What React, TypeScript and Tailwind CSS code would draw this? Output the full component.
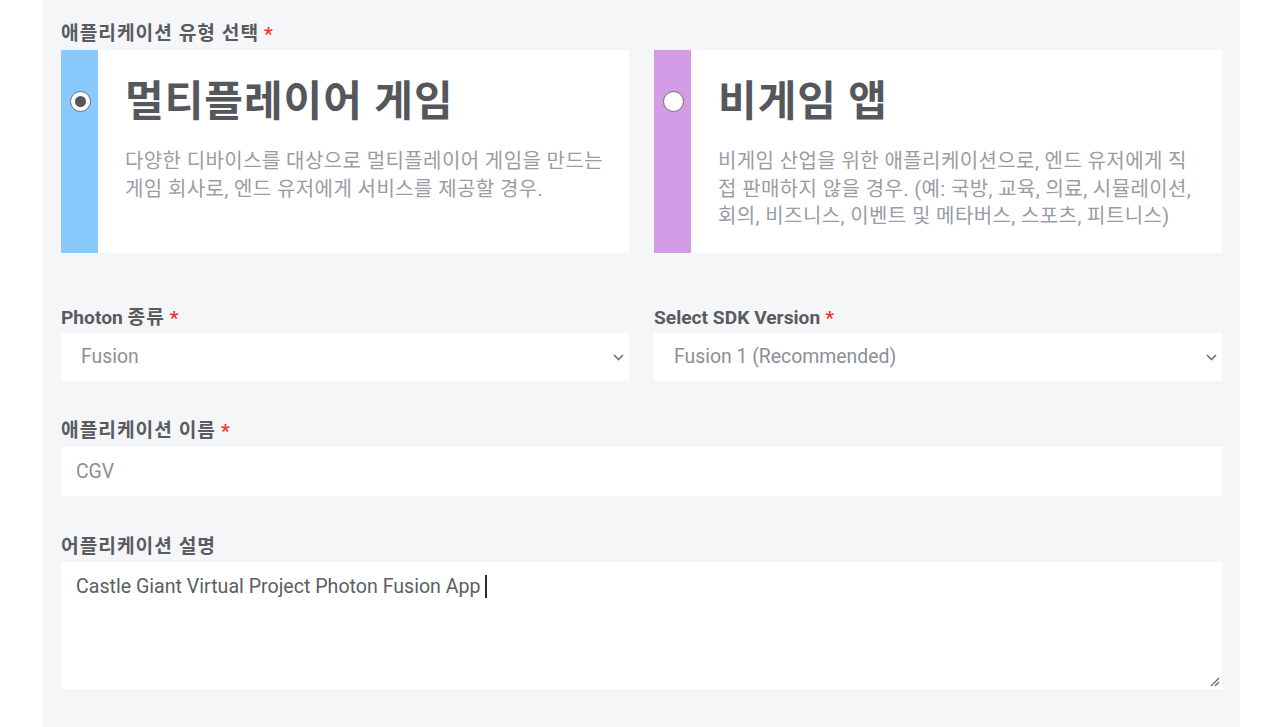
import React from "react";

const font = { fontFamily: 'Roboto, "Noto Sans CJK KR", "Noto Sans", sans-serif' };

function Star() {
  return <span className="text-[#e8392f] ml-[5px] tracking-normal">*</span>;
}

function Radio({ checked }: { checked: boolean }) {
  return (
    <div className="w-[21px] h-[21px] rounded-full bg-white border-[1.5px] border-[#6b6d72] flex items-center justify-center">
      {checked && <div className="w-[11px] h-[11px] rounded-full bg-[#55575d]" />}
    </div>
  );
}

function Card({
  color,
  checked,
  title,
  desc,
}: {
  color: string;
  checked: boolean;
  title: string;
  desc: string;
}) {
  return (
    <div className="flex bg-white h-[203px]">
      <div className={`w-[37px] shrink-0 flex justify-center pl-[2px] pt-[41px] ${color}`}>
        <Radio checked={checked} />
      </div>
      <div className="pl-[27px] pr-[22px] pt-[27px]">
        <div className="text-[42px] leading-[50px] font-bold text-[#55575d] tracking-[1px]">{title}</div>
        <div className="mt-[21px] text-[20px] leading-[27.5px] text-[#989ca4] tracking-[0.4px]">{desc}</div>
      </div>
    </div>
  );
}

function Chevron() {
  return (
    <svg width="11" height="7" viewBox="0 0 11 7" fill="none">
      <path d="M1 1l4.5 4.5L10 1" stroke="#6e7177" strokeWidth="1.6" />
    </svg>
  );
}

function Select({ value }: { value: string }) {
  return (
    <div className="h-[48px] bg-white flex items-center justify-between pl-[20px] pr-[5px] text-[19.4px] text-[#8b8f96]">
      <span>{value}</span>
      <Chevron />
    </div>
  );
}

const labelCls = "text-[19.2px] leading-[24px] font-bold text-[#595b61]";

export default function App() {
  return (
    <div className="w-[1265px] h-[727px] bg-white overflow-hidden" style={font}>
      <div className="ml-[43px] w-[1197px] h-[727px] bg-[#f5f6f8] px-[18px] pt-[22px]">
        <div className={`${labelCls} mb-[4px]`}>
          <span className="tracking-[1px]">애플리케이션 유형 선택</span>
          <Star />
        </div>
        <div className="grid grid-cols-2 gap-[25px]">
          <Card
            color="bg-[#89c9fb]"
            checked
            title="멀티플레이어 게임"
            desc="다양한 디바이스를 대상으로 멀티플레이어 게임을 만드는 게임 회사로, 엔드 유저에게 서비스를 제공할 경우."
          />
          <Card
            color="bg-[#d49be6]"
            checked={false}
            title="비게임 앱"
            desc="비게임 산업을 위한 애플리케이션으로, 엔드 유저에게 직접 판매하지 않을 경우. (예: 국방, 교육, 의료, 시뮬레이션, 회의, 비즈니스, 이벤트 및 메타버스, 스포츠, 피트니스)"
          />
        </div>

        <div className="grid grid-cols-2 gap-[25px] mt-[53px]">
          <div>
            <div className={`${labelCls} mb-[3px]`}>
              Photon <span className="tracking-[1px]">종류</span>
              <Star />
            </div>
            <Select value="Fusion" />
          </div>
          <div>
            <div className={`${labelCls} mb-[3px]`}>
              Select SDK Version
              <Star />
            </div>
            <Select value="Fusion 1 (Recommended)" />
          </div>
        </div>

        <div className="mt-[38px]">
          <div className={`${labelCls} mb-[4px]`}>
            <span className="tracking-[1px]">애플리케이션 이름</span>
            <Star />
          </div>
          <div className="h-[49px] bg-white flex items-center px-[15px] text-[19.4px] text-[#8b8f96]">CGV</div>
        </div>

        <div className="mt-[39px]">
          <div className={`${labelCls} mb-[3px]`}>
            <span className="tracking-[1px]">어플리케이션 설명</span>
          </div>
          <div className="relative h-[127px] bg-white px-[15px] pt-[13px] text-[19.6px] leading-[24px] text-[#5b5e64]">
            <span>Castle Giant Virtual Project Photon Fusion App </span>
            <span className="inline-block w-[1.5px] h-[23px] bg-[#2b2d31] align-[-5px]" />
            <svg className="absolute right-[2px] bottom-[2px]" width="10" height="10" viewBox="0 0 10 10">
              <path d="M9 1L1 9M9 5L5 9" stroke="#666" strokeWidth="1.2" />
            </svg>
          </div>
        </div>
      </div>
    </div>
  );
}
